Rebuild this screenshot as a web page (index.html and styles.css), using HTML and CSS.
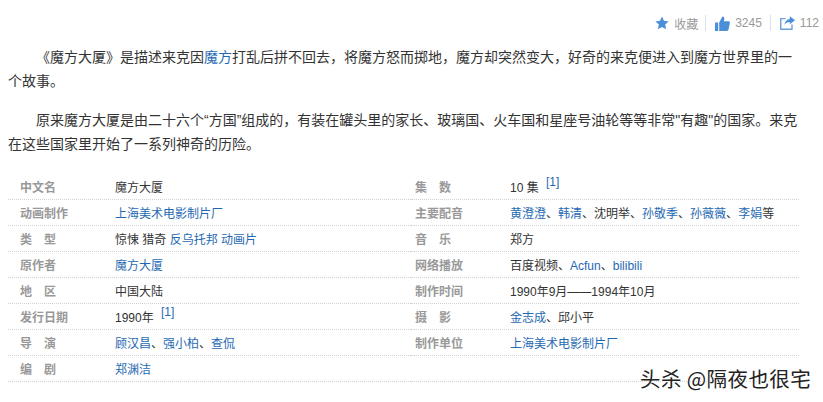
FILE: index.html
```html
<!DOCTYPE html>
<html lang="zh-CN">
<head>
<meta charset="utf-8">
<title>魔方大厦</title>
<link rel="stylesheet" href="styles.css">
</head>
<body>
<div class="actions">
  <span class="action">
    <svg class="icon" width="14" height="14" viewBox="0 0 15 15"><path fill="#4c8fd9" d="M7.5.6l2.1 4.6 5 .6-3.700 3.400 1 5-4.400-2.500-4.400 2.500 1-5L.4 5.800l5-.6z"/></svg>
    <span>收藏</span>
  </span>
  <span class="action">
    <svg class="icon" width="15" height="15" viewBox="0 0 15 15"><path fill="#4c8fd9" d="M0 6.500h3.200V15H0zM4.200 6.500 7.400.5c1.400 0 2.100 1 1.900 2.300L8.900 5.300h4.600c1 0 1.600.9 1.400 1.800l-1.400 6.500c-.2.800-.8 1.400-1.700 1.400H4.200z"/></svg>
    <span>3245</span>
  </span>
  <span class="action">
    <svg class="icon" width="15" height="14" viewBox="0 0 16 15"><path fill="none" stroke="#6d9edb" stroke-width="1.500" d="M12.800 9v5.200H.8V2.800h5.200"/><path fill="#4c8fd9" d="M10.500.3 16 4.600l-5.500 4.300V6.400C8 6.400 6 7.300 4.800 9.600c.3-3.600 2.500-6.200 5.700-6.500z"/></svg>
    <span>112</span>
  </span>
</div>
<p class="para">《魔方大厦》是描述来克因<a href="#">魔方</a>打乱后拼不回去，将魔方怒而掷地，魔方却突然变大，好奇的来克便进入到魔方世界里的一个故事。</p>
<p class="para">原来魔方大厦是由二十六个“方国”组成的，有装在罐头里的家长、玻璃国、火车国和星座号油轮等等非常"有趣"的国家。来克在这些国家里开始了一系列神奇的历险。</p>
<div class="info">
  <dl class="col col-left">
    <div class="row"><dt>中文名</dt><dd>魔方大厦</dd></div>
    <div class="row"><dt>动画制作</dt><dd><a href="#">上海美术电影制片厂</a></dd></div>
    <div class="row"><dt>类　型</dt><dd>惊悚 猎奇 <a href="#">反乌托邦</a> <a href="#">动画片</a></dd></div>
    <div class="row"><dt>原作者</dt><dd><a href="#">魔方大厦</a></dd></div>
    <div class="row"><dt>地　区</dt><dd>中国大陆</dd></div>
    <div class="row"><dt>发行日期</dt><dd>1990年 <sup><a href="#">[1]</a></sup></dd></div>
    <div class="row"><dt>导　演</dt><dd><a href="#">顾汉昌</a>、<a href="#">强小柏</a>、<a href="#">查侃</a></dd></div>
    <div class="row"><dt>编　剧</dt><dd><a href="#">郑渊洁</a></dd></div>
  </dl>
  <dl class="col col-right">
    <div class="row"><dt>集　数</dt><dd>10 集 <sup><a href="#">[1]</a></sup></dd></div>
    <div class="row"><dt>主要配音</dt><dd><a href="#">黄澄澄</a>、<a href="#">韩清</a>、沈明举、<a href="#">孙敬季</a>、<a href="#">孙薇薇</a>、<a href="#">李娟</a>等</dd></div>
    <div class="row"><dt>音　乐</dt><dd>郑方</dd></div>
    <div class="row"><dt>网络播放</dt><dd>百度视频、<a href="#">Acfun</a>、<a href="#">bilibili</a></dd></div>
    <div class="row"><dt>制作时间</dt><dd>1990年9月——1994年10月</dd></div>
    <div class="row"><dt>摄　影</dt><dd><a href="#">金志成</a>、邱小平</dd></div>
    <div class="row"><dt>制作单位</dt><dd><a href="#">上海美术电影制片厂</a></dd></div>
    <div class="row"></div>
  </dl>
</div>
<div class="watermark">头杀 @隔夜也很宅</div>
</body>
</html>
```
FILE: styles.css
```css
* { box-sizing: border-box; }
html, body { margin: 0; padding: 0; }
body {
  width: 823px;
  height: 402px;
  overflow: hidden;
  position: relative;
  background: #fff;
  color: #333;
  font-family: "Liberation Sans", "Noto Sans CJK SC", sans-serif;
  font-size: 12px;
}
a { color: #1f69b3; text-decoration: none; }
.actions {
  display: flex;
  justify-content: flex-end;
  height: 32px;
  padding: 15px 4px 0 0;
  color: #999;
}
.action {
  display: flex;
  align-items: center;
  gap: 5px;
  height: 16px;
  padding: 0 8px 0 9px;
  border-right: 1px solid #d8e0ea;
}
.action:first-child { padding-right: 7px; }
.action:last-child { border-right: 0; padding-right: 0; }
.para {
  margin: 0 22px 0 8px;
  font-size: 14px;
  line-height: 24px;
  text-indent: 28px;
}
.actions + .para { margin-top: 13px; margin-bottom: 15px; }
.para + .para { margin-bottom: 18px; }
.info {
  display: grid;
  grid-template-columns: 403px 388px;
  margin-left: 8px;
}
.col { margin: 0; }
.row {
  display: flex;
  height: 26px;
  padding-top: 2px;
  line-height: 25px;
  border-bottom: 1px dotted #d2d2d2;
}
.col-left .row { padding-left: 12px; }
.col-right .row { padding-left: 4px; }
dt { width: 95px; color: #999; font-weight: 700; }
dd { margin: 0; color: #333; }
sup { font-size: 12px; line-height: 0; vertical-align: 6px; margin-left: 4px; }
.watermark {
  position: absolute;
  left: 640px;
  top: 365px;
  font-family: "Noto Sans CJK SC", sans-serif;
  font-size: 20.5px;
  letter-spacing: 0.4px;
  line-height: 26px;
  color: #222;
  text-shadow: 0 0 2px #fff, 0 0 2px #fff, 0 0 1px #fff;
  white-space: nowrap;
}
```
